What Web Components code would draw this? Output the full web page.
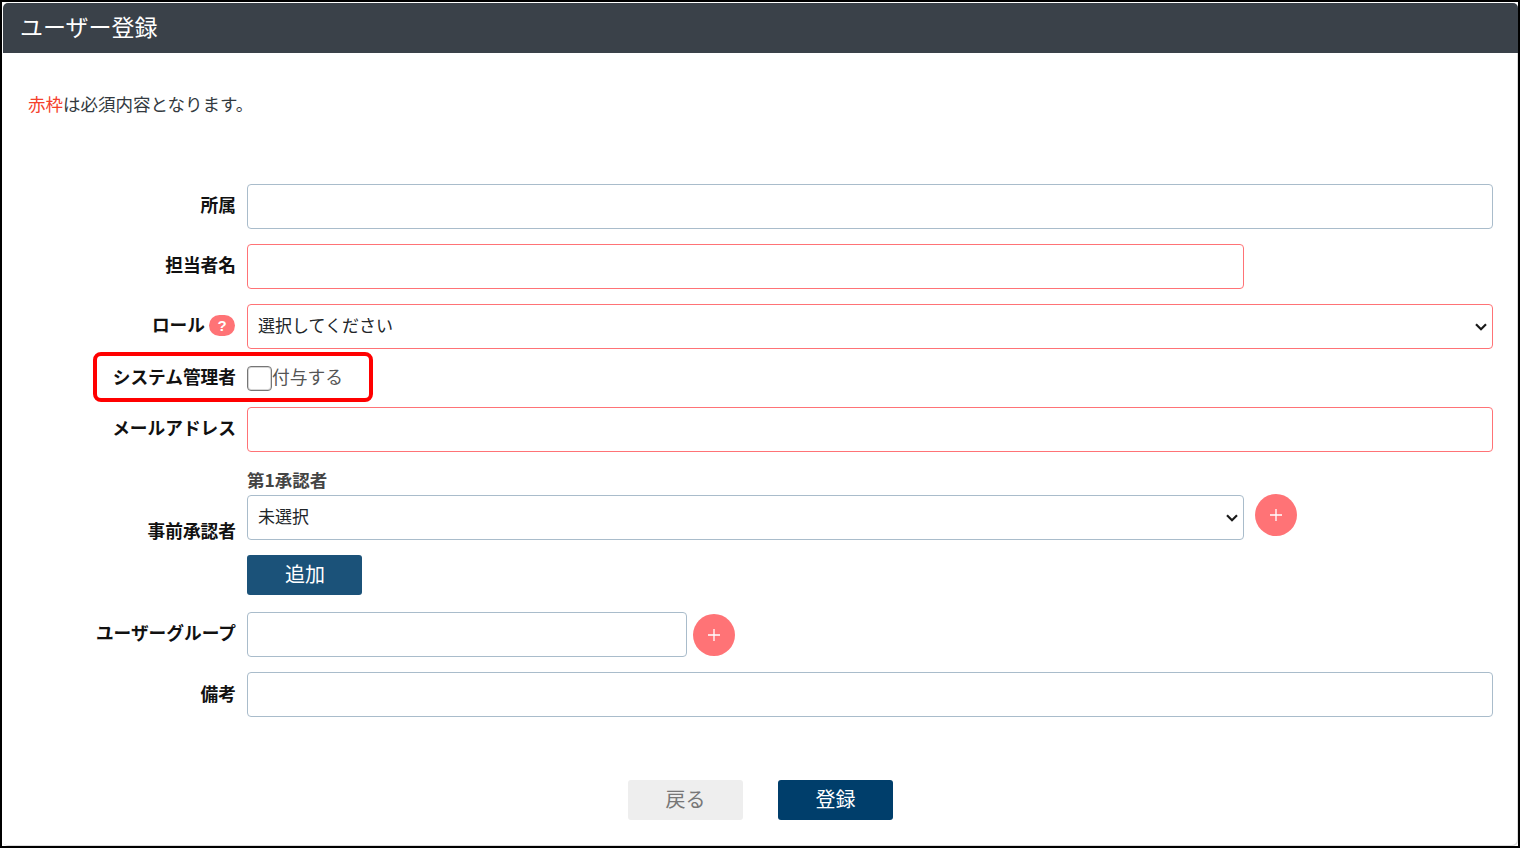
<!DOCTYPE html>
<html lang="ja">
<head>
    <meta charset="UTF-8">
    <title>ユーザー登録</title>
    <style>
        :root {
            --font: "Noto Sans CJK JP", "Noto Sans", sans-serif;
            --red-line: #ff7376;
            --blue-line: #a9bccb;
            --text: #333a40;
        }
        html, body { margin: 0; padding: 0; background: #fff; }
        body { font-family: var(--font); color: var(--text); }
    </style>
</head>
<body>
    <user-page>
        <page-header slot="header">ユーザー登録</page-header>
        <p slot="note"><span style="color:#f5402c">赤枠</span>は必須内容となります。</p>

        <form-row label="所属"><text-field></text-field></form-row>
        <form-row label="担当者名"><text-field required style="width:997px"></text-field></form-row>
        <form-row label="ロール" help><select-field required value="選択してください"></select-field></form-row>
        <form-row label="システム管理者" compact low><check-field>付与する</check-field></form-row>
        <form-row label="メールアドレス"><text-field required></text-field></form-row>
        <form-row label="事前承認者" low>
            <approver-list>
                <span slot="title">第1承認者</span>
                <select-field slot="field" value="未選択"></select-field>
                <round-add slot="field"></round-add>
                <flat-button slot="action" kind="add">追加</flat-button>
            </approver-list>
        </form-row>
        <form-row label="ユーザーグループ" group>
            <text-field style="width:440px"></text-field>
            <round-add></round-add>
        </form-row>
        <form-row label="備考" low><text-field></text-field></form-row>

        <flat-button slot="footer" kind="back">戻る</flat-button>
        <flat-button slot="footer" kind="save">登録</flat-button>

        <note-mark slot="mark"></note-mark>
    </user-page>

    <script>
        class UserPage extends HTMLElement {
            constructor() {
                super();
                this.attachShadow({mode: 'open'}).innerHTML = `
                    <style>
                        :host {
                            display: block;
                            position: relative;
                            box-sizing: border-box;
                            width: 1520px;
                            height: 848px;
                            border: 2px solid #000;
                            padding: 1px 0 0 1px;
                            overflow: hidden;
                        }
                        .card {
                            height: 100%;
                            border-radius: 5px;
                            box-shadow: inset -1px -1px 0 #ddd;
                        }
                        .note {
                            height: 131px;
                            padding: 38px 25px 0;
                            box-sizing: border-box;
                            font-size: 17.5px;
                            line-height: 26px;
                        }
                        ::slotted(p) { margin: 0; }
                        .rows {
                            display: flex;
                            flex-direction: column;
                            gap: 15px;
                            padding: 0 25px;
                        }
                        .footer {
                            display: flex;
                            justify-content: center;
                            gap: 35px;
                            margin-top: 63px;
                        }
                    </style>
                    <div class="card">
                        <slot name="header"></slot>
                        <div class="note"><slot name="note"></slot></div>
                        <div class="rows"><slot></slot></div>
                        <div class="footer"><slot name="footer"></slot></div>
                    </div>
                    <slot name="mark"></slot>
                `;
            }
        }

        class PageHeader extends HTMLElement {
            constructor() {
                super();
                this.attachShadow({mode: 'open'}).innerHTML = `
                    <style>
                        :host {
                            display: flex;
                            align-items: center;
                            box-sizing: border-box;
                            height: 50px;
                            padding: 0 0 4px 17px;
                            background: #3a4149;
                            color: #fff;
                            font-size: 23px;
                            border-radius: 5px 5px 0 0;
                        }
                    </style>
                    <slot></slot>
                `;
            }
        }

        class FormRow extends HTMLElement {
            constructor() {
                super();
                const help = this.hasAttribute('help') ? '<span class="help">?</span>' : '';
                this.attachShadow({mode: 'open'}).innerHTML = `
                    <style>
                        :host {
                            display: flex;
                            align-items: center;
                            gap: 11px;
                        }
                        :host([group]) .field { gap: 6px; }
                        :host([compact]) { height: 28px; }
                        .label {
                            flex: 0 0 208px;
                            display: flex;
                            justify-content: flex-end;
                            align-items: center;
                            gap: 4px;
                            padding-bottom: 2px;
                            white-space: nowrap;
                            font-size: 17.7px;
                            font-weight: 700;
                            color: #111;
                        }
                        .text { padding-bottom: 4px; }
                        :host([low]) .text { padding-bottom: 2px; }
                        .help {
                            width: 26px;
                            height: 21px;
                            margin-right: 1px;
                            border-radius: 11px;
                            background: var(--red-line);
                            color: #fff;
                            font: 700 15px/21px "Liberation Sans", sans-serif;
                            text-align: center;
                        }
                        .field {
                            flex: 1;
                            min-width: 0;
                            display: flex;
                            align-items: center;
                        }
                    </style>
                    <div class="label"><span class="text">${this.getAttribute('label')}</span>${help}</div>
                    <div class="field"><slot></slot></div>
                `;
            }
        }

        class TextField extends HTMLElement {
            constructor() {
                super();
                this.attachShadow({mode: 'open'}).innerHTML = `
                    <style>
                        :host { display: block; flex: 1; }
                        :host([style]) { flex: none; }
                        input {
                            display: block;
                            box-sizing: border-box;
                            width: 100%;
                            height: 45px;
                            padding: 0 10px;
                            border: 1px solid var(--blue-line);
                            border-radius: 4px;
                            background: #fff;
                            font: 17px var(--font);
                            outline: none;
                        }
                        :host([required]) input { border-color: var(--red-line); }
                    </style>
                    <input type="text">
                `;
            }
        }

        class SelectField extends HTMLElement {
            constructor() {
                super();
                this.attachShadow({mode: 'open'}).innerHTML = `
                    <style>
                        :host { display: block; flex: 1; position: relative; }
                        select {
                            appearance: none;
                            display: block;
                            box-sizing: border-box;
                            width: 100%;
                            height: 45px;
                            padding: 0 30px 4px 10px;
                            border: 1px solid var(--blue-line);
                            border-radius: 4px;
                            background: #fff;
                            color: #212529;
                            font: 17px var(--font);
                            outline: none;
                        }
                        :host([required]) select { border-color: var(--red-line); }
                        svg {
                            position: absolute;
                            right: 6px;
                            top: 19px;
                            pointer-events: none;
                        }
                    </style>
                    <select><option>${this.getAttribute('value')}</option></select>
                    <svg width="12" height="8" viewBox="0 0 12 8" aria-hidden="true">
                        <path d="M1 1.2l5 5 5-5" stroke="#1a1a1a" stroke-width="2.2" fill="none"/>
                    </svg>
                `;
            }
        }

        class CheckField extends HTMLElement {
            constructor() {
                super();
                this.attachShadow({mode: 'open'}).innerHTML = `
                    <style>
                        :host {
                            display: flex;
                            align-items: center;
                            font-size: 17.8px;
                            color: #555;
                        }
                        input {
                            appearance: none;
                            box-sizing: border-box;
                            width: 25px;
                            height: 25px;
                            margin: 0;
                            border: 1px solid #767676;
                            border-radius: 4px;
                            background: #fff;
                            box-shadow: inset 0 0 0 1px rgba(118, 118, 118, .3);
                        }
                        span { padding-bottom: 4px; }
                    </style>
                    <input type="checkbox"><span><slot></slot></span>
                `;
            }
        }

        class ApproverList extends HTMLElement {
            constructor() {
                super();
                this.attachShadow({mode: 'open'}).innerHTML = `
                    <style>
                        :host { display: block; flex: 1; padding-bottom: 2px; }
                        .title {
                            height: 28px;
                            font-size: 17.5px;
                            font-weight: 700;
                            line-height: 26px;
                            color: #444;
                        }
                        .line {
                            display: flex;
                            gap: 11px;
                            width: 1050px;
                            margin-bottom: 15px;
                        }
                        ::slotted(round-add) { margin-top: -1px; }
                    </style>
                    <div class="title"><slot name="title"></slot></div>
                    <div class="line"><slot name="field"></slot></div>
                    <slot name="action"></slot>
                `;
            }
        }

        class RoundAdd extends HTMLElement {
            constructor() {
                super();
                this.attachShadow({mode: 'open'}).innerHTML = `
                    <style>
                        :host {
                            flex: none;
                            display: flex;
                            align-items: center;
                            justify-content: center;
                            width: 42px;
                            height: 42px;
                            border-radius: 50%;
                            background: var(--red-line);
                        }
                        svg { display: block; }
                    </style>
                    <svg width="12" height="12" viewBox="0 0 12 12" aria-hidden="true">
                        <path d="M6 0v12M0 6h12" stroke="#fff" stroke-width="1.3" fill="none"/>
                    </svg>
                `;
            }
        }

        class FlatButton extends HTMLElement {
            constructor() {
                super();
                this.attachShadow({mode: 'open'}).innerHTML = `
                    <style>
                        :host {
                            display: flex;
                            align-items: center;
                            justify-content: center;
                            box-sizing: border-box;
                            width: 115px;
                            height: 40px;
                            padding: 0 0 4px;
                            border-radius: 3px;
                            font-size: 20px;
                            color: #fff;
                        }
                        :host([kind="add"]) { background: #1b5279; padding-left: 1px; }
                        :host([kind="save"]) { background: #003e6b; }
                        :host([kind="back"]) { background: #eee; color: #777; }
                    </style>
                    <slot></slot>
                `;
            }
        }

        // red callout drawn over the checkbox row
        class NoteMark extends HTMLElement {
            constructor() {
                super();
                this.attachShadow({mode: 'open'}).innerHTML = `
                    <style>
                        :host {
                            position: absolute;
                            left: 91px;
                            top: 350px;
                            box-sizing: border-box;
                            width: 280px;
                            height: 50px;
                            border: 4px solid #f00;
                            border-radius: 8px;
                            pointer-events: none;
                        }
                    </style>
                `;
            }
        }

        customElements.define('user-page', UserPage);
        customElements.define('page-header', PageHeader);
        customElements.define('form-row', FormRow);
        customElements.define('text-field', TextField);
        customElements.define('select-field', SelectField);
        customElements.define('check-field', CheckField);
        customElements.define('approver-list', ApproverList);
        customElements.define('round-add', RoundAdd);
        customElements.define('flat-button', FlatButton);
        customElements.define('note-mark', NoteMark);
    </script>
</body>
</html>
